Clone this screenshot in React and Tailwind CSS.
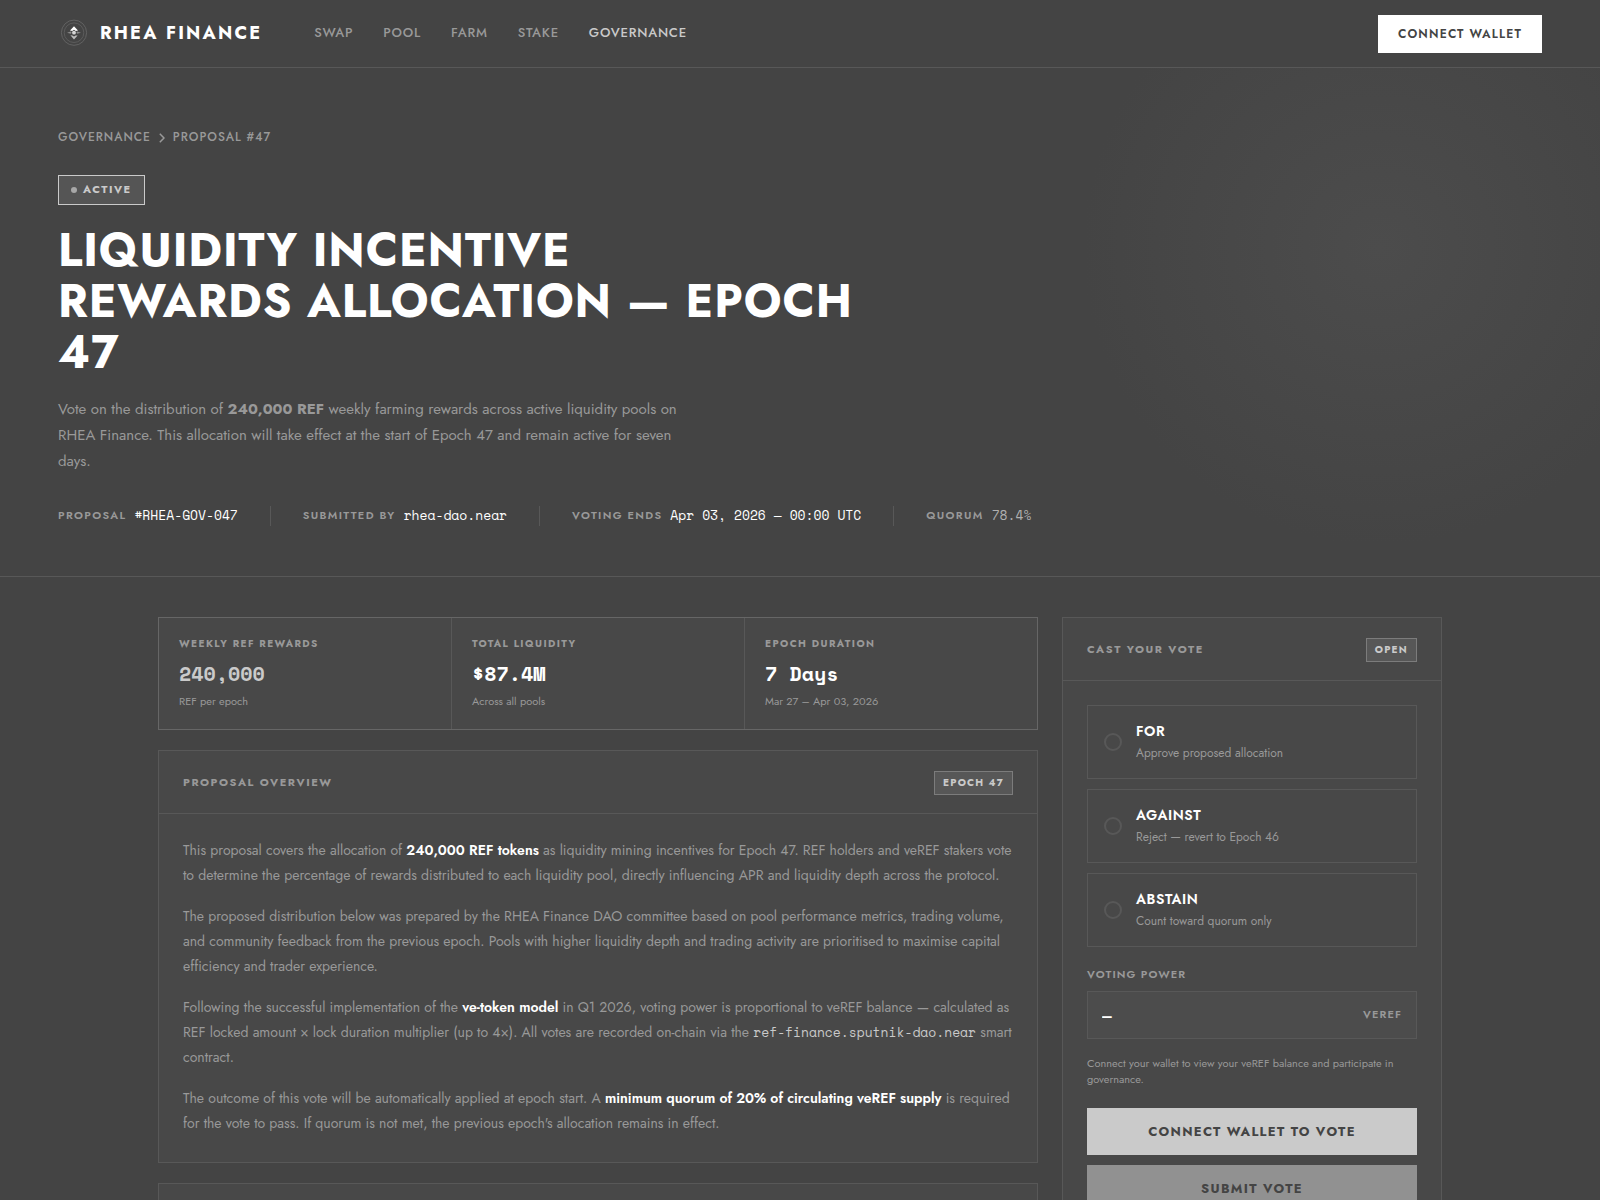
import { useState } from 'react';

const NAV = ['Swap', 'Pool', 'Farm', 'Stake', 'Governance'];

const META = [
  { label: 'Proposal', value: '#RHEA-GOV-047' },
  { label: 'Submitted by', value: 'rhea-dao.near' },
  { label: 'Voting ends', value: 'Apr 03, 2026 — 00:00 UTC' },
  { label: 'Quorum', value: '78.4%', dim: true },
];

const STATS = [
  { label: 'Weekly REF Rewards', value: '240,000', sub: 'REF per epoch', dim: true },
  { label: 'Total Liquidity', value: '$87.4M', sub: 'Across all pools' },
  { label: 'Epoch Duration', value: '7 Days', sub: 'Mar 27 – Apr 03, 2026' },
];

const OPTIONS = [
  { id: 'for', title: 'For', sub: 'Approve proposed allocation' },
  { id: 'against', title: 'Against', sub: 'Reject — revert to Epoch 46' },
  { id: 'abstain', title: 'Abstain', sub: 'Count toward quorum only' },
];

function Logo() {
  return (
    <svg width="32" height="32" viewBox="0 0 32 32" fill="none" aria-hidden="true">
      <circle cx="16" cy="15.7" r="12.6" stroke="#626262" />
      <circle cx="16" cy="15.7" r="9.8" stroke="#5c5c5c" />
      <path d="M16 9.2l4 4.4-2.2.3-1.8-1.2-1.8 1.2-2.2-.3z" fill="#fff" />
      <path d="M16 22.4l-3.6-4.2 2 .2 1.6 1 1.6-1 2 .0z" fill="#bdbdbd" />
      <path d="M9 15.7l3.8-1.1.8 1.1-.8 1.1zM23 15.7l-3.8-1.1-.8 1.1.8 1.1z" fill="#8c8c8c" />
      <circle cx="16" cy="15.7" r="1.9" fill="#d6d6d6" />
    </svg>
  );
}

function Card({ title, tag, children }) {
  return (
    <section className="border border-[#585858] bg-[#484848]">
      <div className="flex items-center justify-between border-b border-[#585858] px-6 pt-5 pb-[18px]">
        <h2 className="pb-[2px] text-[11px] leading-4 font-bold tracking-[0.14em] text-[#999999] uppercase">{title}</h2>
        <span className="border border-[#7c7c7c] bg-[#575757] px-2 text-[10px] leading-[22px] font-bold tracking-[0.12em] text-[#cacaca] uppercase">
          {tag}
        </span>
      </div>
      {children}
    </section>
  );
}

export default function App() {
  const [vote, setVote] = useState('');

  return (
    <div className="min-h-screen bg-[#444444] font-['Jost','Lato',sans-serif] text-white">
      {/* Top bar */}
      <header className="flex h-[68px] items-center justify-between border-b border-[#585858] px-[58px]">
        <div className="flex items-center pb-[2px]">
          <a href="#home" className="flex items-center gap-[10px]">
            <Logo />
            <span className="text-[18px] leading-6 font-bold tracking-[0.12em]">RHEA FINANCE</span>
          </a>
          <nav className="ml-[52px] flex gap-[30px]">
            {NAV.map((n) => (
              <a
                key={n}
                href={`#${n.toLowerCase()}`}
                className={`text-[13px] leading-5 font-medium tracking-[0.06em] uppercase ${
                  n === 'Governance' ? 'text-[#cacaca]' : 'text-[#999999]'
                }`}
              >
                {n}
              </a>
            ))}
          </nav>
        </div>
        <button className="h-[38px] bg-white px-5 text-[12px] font-semibold tracking-[0.1em] text-[#444444]">
          CONNECT WALLET
        </button>
      </header>

      {/* Hero */}
      <div className="relative overflow-hidden border-b border-[#585858] px-[58px] pt-[61px] pb-[50px]">
        <div className="pointer-events-none absolute -top-[120px] -right-20 size-[600px] bg-[radial-gradient(circle,#4c4c4c_0%,#444444_70%)]" />
        <div className="relative">
          <div className="flex items-center gap-2 text-[12px] leading-[17px] font-medium tracking-[0.08em] text-[#999999] uppercase">
            <a href="#governance">Governance</a>
            <svg width="6" height="10" viewBox="0 0 6 10" fill="none" stroke="currentColor" strokeWidth="1.5" aria-hidden="true">
              <path d="M.8.8L5 5 .8 9.2" />
            </svg>
            <span>Proposal #47</span>
          </div>

          <div className="mt-[29px] flex h-[30px] w-fit items-center gap-[6px] border border-[#cacaca] bg-[#555555] px-3 text-[11px] leading-4 font-bold tracking-[0.14em] text-[#cacaca]">
            <span className="size-[6px] rounded-full bg-[#a8a8a8]" />
            <span className="pb-[2px]">ACTIVE</span>
          </div>

          <h1 className="mt-5 max-w-[820px] text-[46px] leading-[51px] font-bold tracking-[0.02em] uppercase">
            Liquidity Incentive
            <br />
            Rewards Allocation — Epoch 47
          </h1>

          <p className="mt-[18px] max-w-[640px] text-[15px] leading-[26px] text-[#999999]">
            Vote on the distribution of <strong className="font-bold">240,000 REF</strong> weekly farming rewards
            across active liquidity pools on RHEA Finance. This allocation will take effect at the start of Epoch 47
            and remain active for seven days.
          </p>

          <dl className="mt-8 flex items-center">
            {META.map((m, i) => (
              <div
                key={m.label}
                className={`flex h-5 items-center gap-2 ${i ? 'ml-8 border-l border-[#585858] pl-8' : ''}`}
              >
                <dt className="pb-[2px] text-[11px] leading-4 font-semibold tracking-[0.12em] text-[#999999] uppercase">{m.label}</dt>
                <dd
                  className={`font-['Space_Mono','Liberation_Mono',monospace] text-[13px] ${
                    m.dim ? 'text-[#b0b0b0]' : 'text-white'
                  }`}
                >
                  {m.value}
                </dd>
              </div>
            ))}
          </dl>
        </div>
      </div>

      {/* Content */}
      <main className="mx-auto grid max-w-[1400px] grid-cols-[minmax(0,1fr)_380px] items-start gap-6 px-[58px] pt-10">
        <div className="flex flex-col gap-5">
          <div className="grid grid-cols-3 gap-px border border-[#666666] bg-[#585858]">
            {STATS.map((s) => (
              <div key={s.label} className="bg-[#484848] px-5 pt-[18px] pb-5">
                <p className="text-[10px] leading-4 font-bold tracking-[0.14em] text-[#999999] uppercase">{s.label}</p>
                <p
                  className={`mt-2 font-['Space_Mono','Liberation_Mono',monospace] text-[20px] leading-7 font-bold ${
                    s.dim ? 'text-[#cacaca]' : 'text-white'
                  }`}
                >
                  {s.value}
                </p>
                <p className="mt-[5px] text-[11px] leading-4 text-[#999999]">{s.sub}</p>
              </div>
            ))}
          </div>

          <Card title="Proposal Overview" tag="Epoch 47">
            <div className="flex flex-col gap-4 px-6 pt-6 pb-[26px] text-[14px] leading-[25px] text-[#999999] [&_strong]:font-semibold [&_strong]:text-white">
              <p>
                This proposal covers the allocation of <strong>240,000 REF tokens</strong> as liquidity mining
                incentives for Epoch 47. REF holders and veREF stakers vote to determine the percentage of rewards
                distributed to each liquidity pool, directly influencing APR and liquidity depth across the protocol.
              </p>
              <p>
                The proposed distribution below was prepared by the RHEA Finance DAO committee based on pool
                performance metrics, trading volume, and community feedback from the previous epoch. Pools with higher
                liquidity depth and trading activity are prioritised to maximise capital efficiency and trader
                experience.
              </p>
              <p>
                Following the successful implementation of the <strong>ve-token model</strong> in Q1 2026, voting
                power is proportional to veREF balance — calculated as REF locked amount × lock duration multiplier (up
                to 4×). All votes are recorded on-chain via the{' '}
                <code className="font-['Space_Mono','Liberation_Mono',monospace] text-[13px] leading-5 text-[#cacaca]">
                  ref-finance.sputnik-dao.near
                </code>{' '}
                smart contract.
              </p>
              <p>
                The outcome of this vote will be automatically applied at epoch start. A{' '}
                <strong>minimum quorum of 20% of circulating veREF supply</strong> is required for the vote to pass. If
                quorum is not met, the previous epoch's allocation remains in effect.
              </p>
            </div>
          </Card>

          <div className="h-16 border border-[#585858] bg-[#484848]" />
        </div>

        <Card title="Cast Your Vote" tag="Open">
          <form className="p-6" onSubmit={(e) => e.preventDefault()}>
            <div className="flex flex-col gap-[10px]">
              {OPTIONS.map((o) => (
                <label
                  key={o.id}
                  className="flex h-[74px] cursor-pointer items-center gap-[14px] border border-[#585858] px-4"
                >
                  <input
                    type="radio"
                    name="vote"
                    checked={vote === o.id}
                    onChange={() => setVote(o.id)}
                    className="size-[18px] appearance-none rounded-full border-2 border-[#585858] checked:border-white"
                  />
                  <span>
                    <span className="block text-[14px] leading-5 font-semibold tracking-[0.04em] uppercase">{o.title}</span>
                    <span className="mt-[2px] block text-[12px] leading-5 text-[#999999]">{o.sub}</span>
                  </span>
                </label>
              ))}
            </div>

            <label
              htmlFor="power"
              className="mt-[19px] block text-[11px] leading-4 font-semibold tracking-[0.1em] text-[#999999] uppercase"
            >
              Voting Power
            </label>
            <div className="mt-[9px] flex h-12 items-center border border-[#585858] bg-[#4c4c4c] px-[14px]">
              <input
                id="power"
                type="text"
                readOnly
                value="—"
                className="min-w-0 flex-1 bg-transparent font-['Space_Mono','Liberation_Mono',monospace] text-[16px] leading-6 font-bold text-white outline-none"
              />
              <span className="pb-[2px] text-[11px] leading-4 font-semibold tracking-[0.1em] text-[#999999]">VEREF</span>
            </div>
            <p className="mt-4 text-[11px] leading-4 text-[#999999]">
              Connect your wallet to view your veREF balance and participate in governance.
            </p>

            <button type="button" className="mt-[21px] h-[47px] w-full bg-[#cacaca] text-[13px] font-bold tracking-[0.1em] text-[#444444]">
              CONNECT WALLET TO VOTE
            </button>
            <button type="submit" className="mt-[10px] h-[47px] w-full bg-[#919191] text-[13px] font-bold tracking-[0.1em] text-[#444444]">
              SUBMIT VOTE
            </button>
          </form>
        </Card>
      </main>
    </div>
  );
}
